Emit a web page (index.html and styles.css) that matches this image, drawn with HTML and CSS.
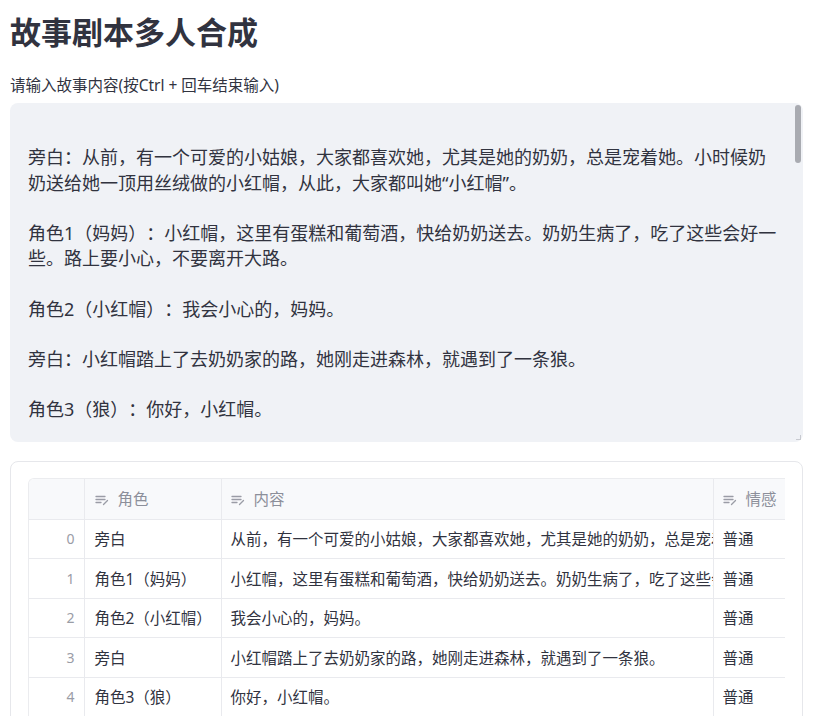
FILE: index.html
```html
<!DOCTYPE html>
<html lang="zh-CN">
<head>
    <meta charset="UTF-8">
    <meta name="viewport" content="width=device-width, initial-scale=1.0">
    <title>故事剧本多人合成</title>
    <link rel="stylesheet" href="styles.css">
</head>
<body>
    <div class="page">
        <h1 class="page-title">故事剧本多人合成</h1>

        <label class="field-label" for="story">请输入故事内容(按Ctrl + 回车结束输入)</label>
        <div class="story-box" id="story">
            <div class="story-text">
<br>旁白：从前，有一个可爱的小姑娘，大家都喜欢她，尤其是她的奶奶，总是宠着她。小时候奶奶送给她一顶用丝绒做的小红帽，从此，大家都叫她“小红帽”。

角色1（妈妈）：小红帽，这里有蛋糕和葡萄酒，快给奶奶送去。奶奶生病了，吃了这些会好一些。路上要小心，不要离开大路。

角色2（小红帽）：我会小心的，妈妈。

旁白：小红帽踏上了去奶奶家的路，她刚走进森林，就遇到了一条狼。

角色3（狼）：你好，小红帽。

角色3（狼）：你要去哪里呀？</div>
            <span class="scroll-thumb"></span>
            <span class="resize-grip"></span>
        </div>

        <div class="table-card">
            <div class="data-grid">
                <table>
                    <colgroup>
                        <col class="col-index">
                        <col class="col-role">
                        <col class="col-text">
                        <col class="col-mood">
                    </colgroup>
                    <thead>
                        <tr>
                            <th></th>
                            <th><svg class="col-icon" viewBox="0 0 14 12"><path d="M1 2.5H10M1 5.5H10M1 8.5H6M8.5 10.5L12.5 6.5"/></svg>角色</th>
                            <th><svg class="col-icon" viewBox="0 0 14 12"><path d="M1 2.5H10M1 5.5H10M1 8.5H6M8.5 10.5L12.5 6.5"/></svg>内容</th>
                            <th><svg class="col-icon" viewBox="0 0 14 12"><path d="M1 2.5H10M1 5.5H10M1 8.5H6M8.5 10.5L12.5 6.5"/></svg>情感</th>
                        </tr>
                    </thead>
                    <tbody>
                        <tr>
                            <td class="idx">0</td>
                            <td>旁白</td>
                            <td>从前，有一个可爱的小姑娘，大家都喜欢她，尤其是她的奶奶，总是宠着她。小时候奶奶送给她一顶用丝绒做的小红帽，从此，大家都叫她“小红帽”。</td>
                            <td>普通</td>
                        </tr>
                        <tr>
                            <td class="idx">1</td>
                            <td>角色1（妈妈）</td>
                            <td>小红帽，这里有蛋糕和葡萄酒，快给奶奶送去。奶奶生病了，吃了这些会好一些。路上要小心，不要离开大路。</td>
                            <td>普通</td>
                        </tr>
                        <tr>
                            <td class="idx">2</td>
                            <td>角色2（小红帽）</td>
                            <td>我会小心的，妈妈。</td>
                            <td>普通</td>
                        </tr>
                        <tr>
                            <td class="idx">3</td>
                            <td>旁白</td>
                            <td>小红帽踏上了去奶奶家的路，她刚走进森林，就遇到了一条狼。</td>
                            <td>普通</td>
                        </tr>
                        <tr>
                            <td class="idx">4</td>
                            <td>角色3（狼）</td>
                            <td>你好，小红帽。</td>
                            <td>普通</td>
                        </tr>
                    </tbody>
                </table>
            </div>
        </div>
    </div>
</body>
</html>
```

FILE: styles.css
```css
/* base */
* {
    margin: 0;
    padding: 0;
    box-sizing: border-box;
}

body {
    background: #ffffff;
    color: #31333f;
    font-family: "Noto Sans", "Noto Sans CJK SC", sans-serif;
    text-spacing-trim: space-all;
}

.page {
    padding: 0 12px 0 10px;
}

/* title + label */
.page-title {
    margin-top: 14px;
    font-size: 31px;
    line-height: 37px;
    font-weight: 700;
    color: #31333f;
}

.field-label {
    display: block;
    margin-top: 24px;
    font-size: 15.5px;
    line-height: 20px;
    color: #31333f;
}

/* story textarea */
.story-box {
    position: relative;
    margin-top: 8px;
    height: 339px;
    background: #f0f2f6;
    border-radius: 8px;
    overflow: hidden;
}

.story-text {
    padding: 0 23px 0 18px;
    font-size: 18px;
    line-height: 25.2px;
    white-space: pre-wrap;
    color: #31333f;
    margin-top: -8px;
}

.scroll-thumb {
    position: absolute;
    top: 2px;
    right: 2px;
    width: 6px;
    height: 58px;
    border-radius: 3px;
    background: #a9abb1;
}

.resize-grip {
    position: absolute;
    right: 2px;
    bottom: 2px;
    width: 5px;
    height: 5px;
    border-right: 1px solid #c8cad0;
    border-bottom: 1px solid #c8cad0;
}

/* dataframe */
.table-card {
    margin-top: 19px;
    border: 1px solid #e6e7eb;
    border-radius: 8px;
    padding: 16px 17px 18px;
}

.data-grid {
    width: 100%;
    overflow: hidden;
    border: 1px solid #ebecef;
    border-right: none;
    border-radius: 6px 0 0 0;
}

.data-grid table {
    width: 775px;
    table-layout: fixed;
    border-collapse: collapse;
    font-size: 15.5px;
}

.col-index { width: 55px; }
.col-role { width: 137px; }
.col-text { width: 492px; }
.col-mood { width: 91px; }

.data-grid th,
.data-grid td {
    height: 39.5px;
    padding: 0 9px;
    text-align: left;
    white-space: nowrap;
    overflow: hidden;
    border-right: 1px solid #e9eaee;
    border-bottom: 1px solid #e9eaee;
}

.data-grid th {
    height: 40px;
    background: #f8f9fb;
    font-weight: 400;
    color: #8c8f9a;
}

.data-grid td {
    color: #31333f;
}

.data-grid td.idx {
    text-align: right;
    color: #9a9ca6;
    font-size: 14px;
    padding-right: 9px;
}

.data-grid td:nth-child(2),
.data-grid th:nth-child(2) {
    padding-left: 10px;
}

.col-icon {
    width: 14px;
    height: 12px;
    margin-right: 9px;
    vertical-align: -1px;
    fill: none;
    stroke: #9a9ca6;
    stroke-width: 1.3;
    stroke-linecap: round;
}
```
